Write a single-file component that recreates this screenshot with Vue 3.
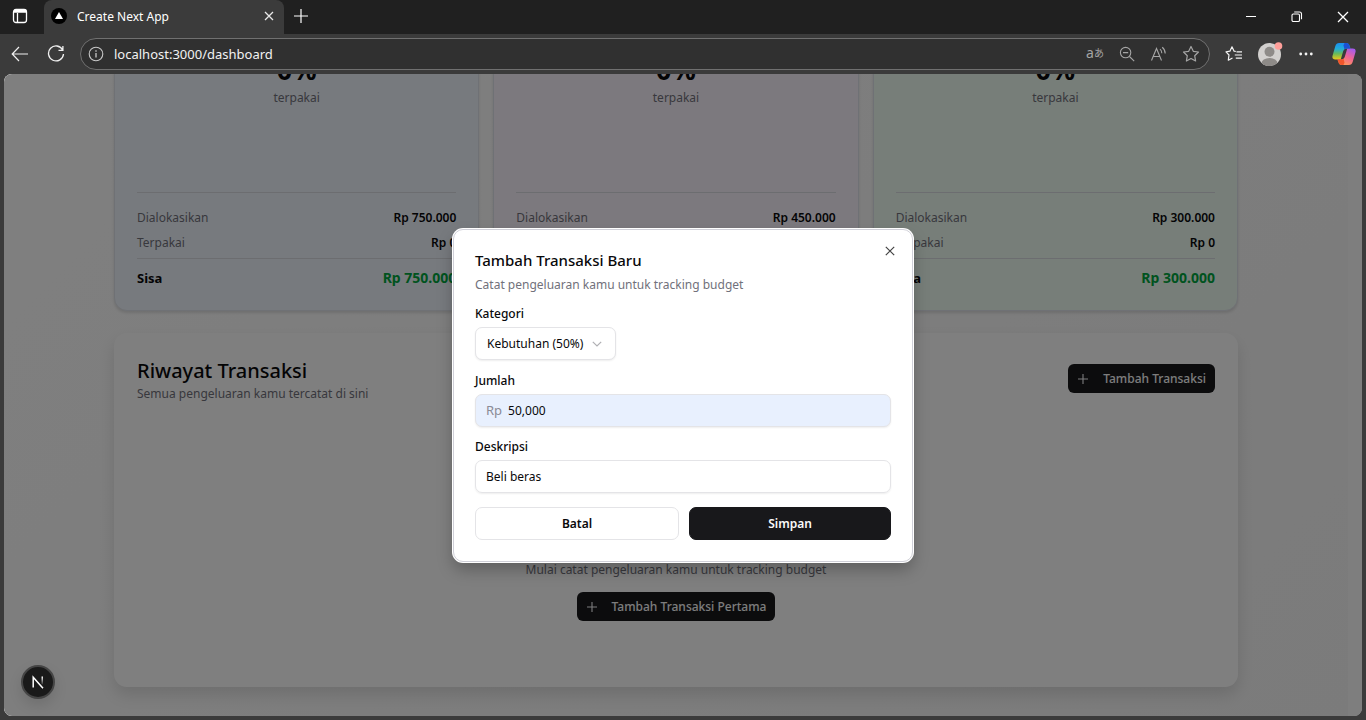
<script setup>
const cards = [
  { key: 'needs', amount: 'Rp 750.000' },
  { key: 'wants', amount: 'Rp 450.000' },
  { key: 'savings', amount: 'Rp 300.000' }
]
</script>

<template>
  <div class="browser">
    <header class="tabbar">
      <button class="bare tabs-menu" aria-label="Tab actions">
        <svg width="16" height="16" viewBox="0 0 16 16" fill="none" stroke="#fff" stroke-width="1.3"><rect x="1.5" y="1.5" width="13" height="13" rx="2.5" /><path d="M1.5 4h13M5.5 5v9.5" /><path d="M2 2.8h12" stroke-width="2.4" /></svg>
      </button>
      <div class="tab">
        <svg width="16" height="16" viewBox="0 0 16 16"><circle cx="8" cy="8" r="8" fill="#000" /><path d="M8 4l4 7H4z" fill="#fff" /></svg>
        <span class="tab-title">Create Next App</span>
        <button class="bare" aria-label="Close tab">
          <svg width="10" height="10" viewBox="0 0 10 10" stroke="#e8e8e8" stroke-width="1.3"><path d="M1 1l8 8M9 1L1 9" /></svg>
        </button>
      </div>
      <button class="bare new-tab" aria-label="New tab">
        <svg width="14" height="14" viewBox="0 0 14 14" stroke="#fff" stroke-width="1.2"><path d="M7 0v14M0 7h14" /></svg>
      </button>
      <div class="win">
        <button class="bare" aria-label="Minimize"><svg width="12" height="12" viewBox="0 0 12 12" stroke="#fff"><path d="M1 5.500h10" /></svg></button>
        <button class="bare" aria-label="Restore"><svg width="12" height="12" viewBox="0 0 12 12" fill="none" stroke="#fff" stroke-width="1.1"><rect x="1" y="3" width="7.5" height="7.5" rx="1.3" /><path d="M3.2 1h5.3q2 0 2 2v5.3" /></svg></button>
        <button class="bare" aria-label="Close"><svg width="12" height="12" viewBox="0 0 12 12" stroke="#fff" stroke-width="1.3"><path d="M1 1l10 10M11 1L1 11" /></svg></button>
      </div>
    </header>

    <nav class="toolbar">
      <button class="bare tool" aria-label="Back"><svg width="18" height="16" viewBox="0 0 18 16" fill="none" stroke="#f0f0f0" stroke-width="1.2"><path d="M17 8H1.5M8 1L1.2 8 8 15" /></svg></button>
      <button class="bare tool reload" aria-label="Reload"><svg width="18" height="18" viewBox="0 0 18 18" fill="none" stroke="#f0f0f0" stroke-width="1.3"><path d="M15.7 5A7.5 7.5 0 1 0 16.5 9M15.9 1v4.4h-4.4" /></svg></button>
      <div class="address">
        <svg width="16" height="16" viewBox="0 0 16 16" fill="none" stroke="#c8c8c8" stroke-width="1.1"><circle cx="8" cy="8" r="6.8" /><path d="M8 7v4.5M8 4.3v1.4" stroke-width="1.3" /></svg>
        <input class="url" aria-label="Address" value="localhost:3000/dashboard">
        <div class="address-tools">
          <button class="bare translate" aria-label="Translate">a<span>あ</span></button>
          <button class="bare" aria-label="Zoom out"><svg width="16" height="16" viewBox="0 0 16 16" fill="none" stroke="#a5a5a5" stroke-width="1.1"><circle cx="6.6" cy="6.6" r="5.2" /><path d="M10.5 10.5l4.7 4.7M4 6.6h5.2" /></svg></button>
          <button class="bare" aria-label="Read aloud"><svg width="18" height="16" viewBox="0 0 18 16" fill="none" stroke="#a5a5a5" stroke-width="1.1"><path d="M1.5 14.5L6.5 2.5l5 12M3.2 10.5h6.6M10 3.2q1.8 1.5 1.8 4M12.2 1.2q3 2.3 3 6.3" /></svg></button>
          <button class="bare" aria-label="Favorite"><svg width="18" height="18" viewBox="0 0 18 18" fill="none" stroke="#a5a5a5" stroke-width="1.2" stroke-linejoin="round"><path d="M9 1.5l2.3 4.8 5.2.7-3.8 3.7.9 5.3L9 13.5 4.4 16l.9-5.3L1.5 7l5.2-.7z" /></svg></button>
        </div>
      </div>
      <div class="right-tools">
        <button class="bare" aria-label="Favorites list"><svg width="18" height="18" viewBox="0 0 18 18" fill="none" stroke="#f4f4f4" stroke-width="1.2" stroke-linejoin="round"><path d="M10.8 6.5L9.1 6.2 7 1.8 4.9 6.2 1 6.8l3 3.2-.7 5.2L7.5 13M11.5 6.8H17M9.8 10H17M10.8 13.2H17" /></svg></button>
        <button class="bare" aria-label="Profile"><svg width="26" height="26" viewBox="0 0 26 26"><defs><clipPath id="face"><circle cx="12.5" cy="13.5" r="11.5" /></clipPath></defs><circle cx="12.5" cy="13.5" r="11.5" fill="#d2d0ce" /><g clip-path="url(#face)" fill="#8e8b88"><circle cx="12.5" cy="10.8" r="5" /><ellipse cx="12.5" cy="22.5" rx="8" ry="5.5" /></g><circle cx="21.5" cy="5" r="3.8" fill="#ff9f9a" /></svg></button>
        <button class="bare" aria-label="More"><svg width="14" height="4" viewBox="0 0 14 4" fill="#f4f4f4"><circle cx="1.7" cy="2" r="1.4" /><circle cx="7" cy="2" r="1.4" /><circle cx="12.3" cy="2" r="1.4" /></svg></button>
        <button class="bare copilot" aria-label="Copilot">
          <svg width="24" height="24" viewBox="0 0 22 22">
            <defs>
              <linearGradient id="cpa" x1="0" y1="0" x2="0" y2="1"><stop offset="0" stop-color="#1a8ff0" /><stop offset=".35" stop-color="#22acd8" /><stop offset=".65" stop-color="#6abb58" /><stop offset="1" stop-color="#edc81a" /></linearGradient>
              <linearGradient id="cpb" x1=".8" y1="0" x2=".3" y2="1"><stop offset="0" stop-color="#a45aef" /><stop offset=".5" stop-color="#f06593" /><stop offset="1" stop-color="#ff9a55" /></linearGradient>
            </defs>
            <path d="M6.500 1H13q2.500 0 3 2.500L17 6h-3.500q-2.500 0-3.300 2.800L8 16H3Q-.3 16 .5 12.500L3 4q.9-3 3.500-3z" fill="url(#cpa)" />
            <path d="M15.500 21H9q-2.500 0-3-2.500L5 16h3.500q2.500 0 3.300-2.800L14 6h5q3.300 0 2.500 3.500L19 18q-.9 3-3.500 3z" fill="url(#cpb)" />
            <path d="M11.500 1H13q2.500 0 3 2.500l.8 2.500h-3.300q-1.200 0-2 .8L10.500 3z" fill="#1c50d4" />
            <path d="M10.500 21H9q-2.500 0-3-2.500L5 16h3.500q1.200 0 2-.8l1 3.800z" fill="#f0562c" />
            <path d="M10.700 8.200l1.900-.6-1.800 6.200-1.600.4z" fill="#3b3b3b" />
          </svg>
        </button>
      </div>
    </nav>

    <div class="viewport">
      <main class="page">
        <div class="container">
          <section class="cards">
            <article v-for="c in cards" :key="c.key" class="card" :class="c.key">
              <div class="usage"><strong>0%</strong><span>terpakai</span></div>
              <dl class="stats">
                <div><dt>Dialokasikan</dt><dd>{{ c.amount }}</dd></div>
                <div><dt>Terpakai</dt><dd>Rp 0</dd></div>
                <div class="rest"><dt>Sisa</dt><dd>{{ c.amount }}</dd></div>
              </dl>
            </article>
          </section>
          <section class="history">
            <div class="history-head">
              <div>
                <h2>Riwayat Transaksi</h2>
                <p>Semua pengeluaran kamu tercatat di sini</p>
              </div>
              <button class="primary"><svg width="12" height="12" viewBox="0 0 12 12" stroke="#fafafa" stroke-width="1.1"><path d="M6 1v10M1 6h10" /></svg>Tambah Transaksi</button>
            </div>
            <div class="empty">
              <p>Mulai catat pengeluaran kamu untuk tracking budget</p>
              <button class="primary"><svg width="12" height="12" viewBox="0 0 12 12" stroke="#fafafa" stroke-width="1.1"><path d="M6 1v10M1 6h10" /></svg>Tambah Transaksi Pertama</button>
            </div>
          </section>
        </div>
      </main>
      <div class="overlay">
        <form class="dialog" role="dialog" aria-labelledby="dialog-title" @submit.prevent>
          <button type="button" class="bare close" aria-label="Tutup"><svg width="10" height="10" viewBox="0 0 10 10" stroke="#444" stroke-width="1.2"><path d="M.8.8l8.400 8.400M9.200.8L.8 9.200" /></svg></button>
          <h2 id="dialog-title">Tambah Transaksi Baru</h2>
          <p>Catat pengeluaran kamu untuk tracking budget</p>
          <label for="category">Kategori</label>
          <div class="select-wrap">
            <select id="category"><option>Kebutuhan (50%)</option></select>
            <svg width="10" height="6" viewBox="0 0 10 6" fill="none" stroke="#b0b0b4" stroke-width="1.2"><path d="M.8.8L5 5 9.200.8" /></svg>
          </div>
          <label for="amount">Jumlah</label>
          <div class="field filled"><span>Rp</span><input id="amount" value="50,000"></div>
          <label for="description">Deskripsi</label>
          <div class="field"><input id="description" value="Beli beras"></div>
          <div class="actions">
            <button type="button" class="cancel">Batal</button>
            <button type="submit" class="save">Simpan</button>
          </div>
        </form>
      </div>
      <button class="next-badge" aria-label="Next.js Dev Tools">
        <svg width="14" height="14" viewBox="0 0 14 14" fill="none" stroke-width="1.5"><defs><linearGradient id="nfade" x1="0" y1="0" x2="0" y2="1"><stop offset="0" stop-color="#fff" /><stop offset="1" stop-color="#fff" stop-opacity=".1" /></linearGradient></defs><path d="M2.200 12.500V2.200L12 13.200" stroke="#fff" /><rect x="10.500" y="1.500" width="1.500" height="8" fill="url(#nfade)" /></svg>
      </button>
    </div>
  </div>
</template>

<style>
html, body { height: 100%; }
body { margin: 0; overflow: hidden; }
#app { height: 100%; }
</style>

<style scoped>
* { box-sizing: border-box; }
.browser { height: 100%; display: flex; flex-direction: column; background: #3b3b3b; font-family: "Noto Sans", "Open Sans", "Noto Sans CJK JP", sans-serif; font-size: 12px; color: #fff; }
button, input, select { font: inherit; color: inherit; }
.bare { border: 0; background: none; padding: 0; display: flex; align-items: center; justify-content: center; }
h2, p, dl, dd { margin: 0; }
svg { display: block; flex: none; }

.tabbar { height: 34px; flex: none; display: flex; background: #202020; }
.tabs-menu { width: 40px; padding-bottom: 2px; }
.tab { margin-left: 4px; width: 240px; padding: 0 10px 2px 7px; display: flex; align-items: center; gap: 10px; background: #3b3b3b; border-radius: 8px 8px 0 0; }
.tab-title { flex: 1; }
.new-tab { width: 34px; padding-bottom: 2px; }
.win { margin-left: auto; display: flex; }
.win button { width: 46px; }

.toolbar { height: 40px; flex: none; display: flex; align-items: center; }
.tool { width: 40px; height: 32px; }
.reload { width: 32px; }
.address { flex: 1; margin-left: 8px; height: 32px; padding: 0 8px 0 7px; display: flex; align-items: center; gap: 10px; border: 1px solid #707070; border-radius: 16px; background: #303030; }
.url { flex: 1; min-width: 0; border: 0; padding: 0; background: none; outline: 0; font-size: 13px; color: #f2f2f2; }
.address-tools { display: flex; align-items: center; gap: 12px; }
.address-tools button { width: 20px; }
.translate { font-size: 14px; line-height: 18px; padding-bottom: 2px; color: #a5a5a5; }
.translate span { font-size: 10px; }
.right-tools { width: 156px; padding-left: 11px; display: flex; align-items: center; gap: 10px; }
.right-tools button { width: 26px; }
.right-tools .copilot { width: 30px; }

.viewport { flex: 1; min-height: 0; margin: 0 4px 4px; position: relative; overflow: hidden; border-radius: 8px; background: #fcfcfc; }
.page { height: 100%; margin-right: 14px; overflow: hidden; background: linear-gradient(135deg, #fff, #f7f7f7); color: #09090b; }
.container { max-width: 1124px; margin: 0 auto; }
.cards { display: grid; grid-template-columns: repeat(3, 1fr); gap: 14px; margin-top: -24px; }
.card { height: 261px; padding: 1px 22px 22px; display: flex; flex-direction: column; justify-content: space-between; border: 1px solid #dfe3ea; border-radius: 0 0 13px 13px; box-shadow: 0 2px 3px rgba(0, 0, 0, .12); }
.needs { background: #eff5fd; }
.wants { background: #f9f3fc; }
.savings { background: #effcf3; }
.usage { display: flex; flex-direction: column; align-items: center; color: #71717b; }
.usage strong { font-size: 27px; line-height: 36px; color: #09090b; }
.usage span { line-height: 20px; }
.stats { border-top: 1px solid #d8dbe0; padding-top: 15px; }
.stats div { display: flex; justify-content: space-between; line-height: 20px; margin-bottom: 5px; }
.stats dt { color: #71717b; }
.stats dd { font-weight: 600; }
.stats .rest { border-top: 1px solid #d8dbe0; padding-top: 9px; margin: 0; font-size: 13px; }
.rest dt { font-weight: 700; color: #09090b; }
.stats .rest dd { font-size: 14px; font-weight: 700; color: #00a63e; }
.history { margin-top: 22px; height: 354px; padding: 25px 23px; border-radius: 13px; background: #fff; box-shadow: 0 8px 16px rgba(0, 0, 0, .12); }
.history-head { display: flex; justify-content: space-between; align-items: flex-start; }
.history-head h2 { font-size: 20px; line-height: 26px; font-weight: 500; }
.history-head p, .empty p { color: #71717b; line-height: 20px; }
.primary { height: 29px; padding: 0 9px; display: flex; align-items: center; gap: 14px; border: 0; border-radius: 6px; background: #18181b; color: #fafafa; font-weight: 500; }
.history-head .primary { margin-top: 6px; }
.empty { margin-top: 156px; display: flex; flex-direction: column; align-items: center; gap: 12px; }

.overlay { position: absolute; inset: 0; display: flex; align-items: center; justify-content: center; background: rgba(0, 0, 0, .5); color: #09090b; }
.dialog { position: relative; width: 460px; padding: 21px; display: flex; flex-direction: column; border: 1px solid #d0d0d8; border-radius: 10px; background: #fff; box-shadow: 0 0 0 1px #fff, 0 8px 16px rgba(0, 0, 0, .25); }
.close { position: absolute; top: 16px; right: 17px; width: 10px; height: 10px; }
.dialog h2 { font-size: 15px; line-height: 18px; font-weight: 500; }
.dialog p { margin: 6px 0 10px; line-height: 20px; color: #71717b; }
.dialog label { line-height: 18px; font-weight: 500; margin-bottom: 4px; }
.select-wrap { position: relative; width: 141px; margin-bottom: 12px; }
.select-wrap select { appearance: none; width: 100%; height: 33px; padding: 0 11px; border: 1px solid #e4e4e7; border-radius: 7px; background: #fff; box-shadow: 0 1px 2px rgba(0, 0, 0, .07); }
.select-wrap svg { position: absolute; right: 14px; top: 14px; pointer-events: none; }
.field { height: 33px; margin-bottom: 11px; padding: 0 10px; display: flex; align-items: center; gap: 6px; border: 1px solid #e4e4e7; border-radius: 7px; box-shadow: 0 1px 2px rgba(0, 0, 0, .07); }
.field input { flex: 1; min-width: 0; border: 0; padding: 0; outline: 0; background: none; }
.filled { background: #e8f0fe; }
.filled span { font-size: 13px; color: #8b8b96; }
.actions { margin-top: 3px; display: grid; grid-template-columns: 204px 1fr; gap: 10px; }
.actions button { height: 33px; border: 1px solid #e4e4e7; border-radius: 7px; background: #fff; font-weight: 600; }
.actions .save { background: #18181b; border-color: #18181b; color: #fafafa; }

.next-badge { position: absolute; left: 17px; bottom: 17px; width: 34px; height: 34px; padding: 0; display: flex; align-items: center; justify-content: center; border: 2px solid #454545; border-radius: 50%; background: #1a1a1a; box-shadow: 0 6px 14px rgba(0, 0, 0, .12); }
</style>
